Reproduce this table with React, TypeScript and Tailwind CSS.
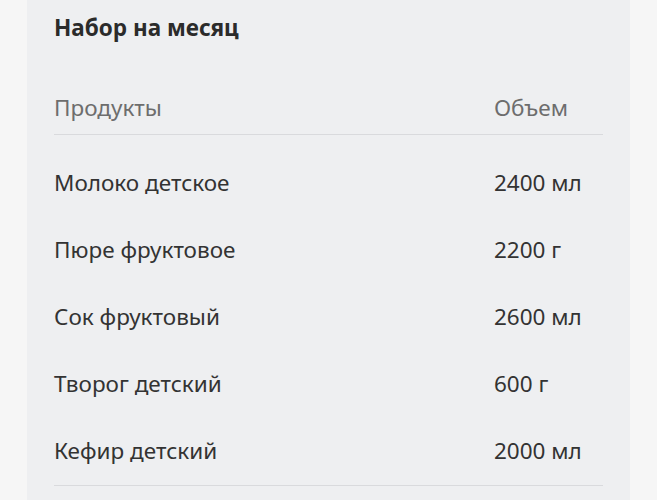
const items = [
  { name: 'Молоко детское', volume: '2400 мл' },
  { name: 'Пюре фруктовое', volume: '2200 г' },
  { name: 'Сок фруктовый', volume: '2600 мл' },
  { name: 'Творог детский', volume: '600 г' },
  { name: 'Кефир детский', volume: '2000 мл' },
];

export default function App() {
  return (
    <div className="min-h-[500px] bg-[#f6f6f6] pl-[27px] pr-[27px] font-['Noto_Sans',sans-serif]">
      <div className="min-h-[500px] bg-[#eeeff1] pl-[27px] pr-[27px]">
        <h2 className="pt-[13px] text-[22.5px] font-bold leading-[30px] text-[#2b2b2b]">Набор на месяц</h2>
        <div className="mt-[38px] flex h-[54px] items-center border-b border-[#d9dadd] text-[22.5px] text-[#6d6d6d]">
          <span className="flex-1">Продукты</span>
          <span className="w-[109px]">Объем</span>
        </div>
        <div className="border-b border-[#d9dadd] pb-[1px] pt-[14px]">
          {items.map((item) => (
            <div key={item.name} className="flex h-[67px] items-center text-[22.5px] text-[#333333]">
              <span className="flex-1">{item.name}</span>
              <span className="w-[109px]">{item.volume}</span>
            </div>
          ))}
        </div>
      </div>
    </div>
  );
}
